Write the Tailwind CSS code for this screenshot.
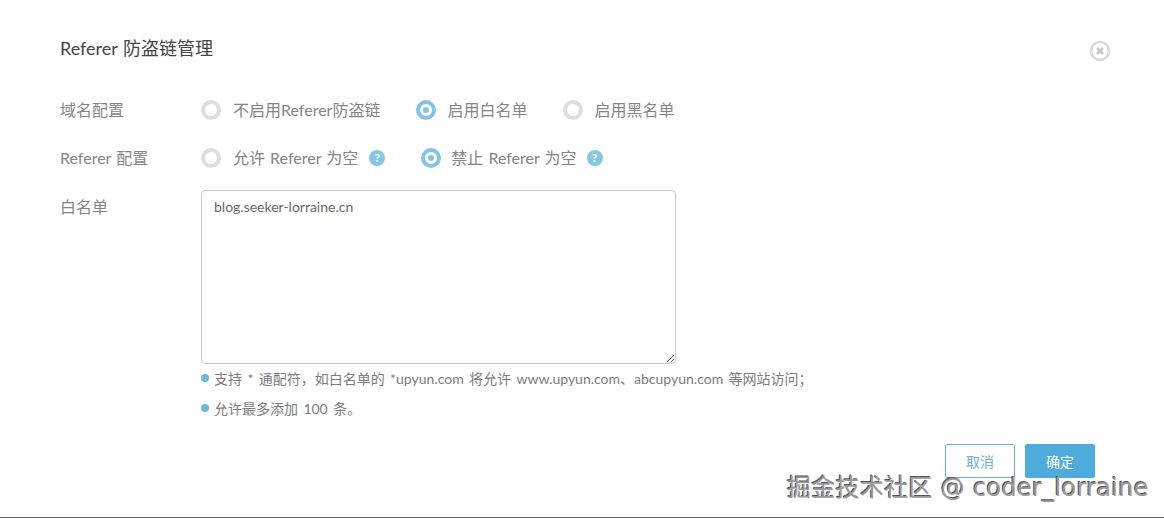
<!DOCTYPE html>
<html lang="zh">
<head>
<meta charset="utf-8">
<script src="https://cdn.jsdelivr.net/npm/@tailwindcss/browser@4"></script>
</head>
<body class="bg-white">
<div class="relative w-[1164px] h-[518px] overflow-hidden bg-white border-b border-[#666] font-['Lato','Noto_Sans_CJK_SC',sans-serif] text-[16px] text-[#858585] [word-spacing:1px]">
  <div class="flex justify-between pl-[60px] pr-[53px] pt-[36px]">
    <h1 class="text-[18px] leading-[24px] text-[#444] font-normal">Referer 防盗链管理</h1>
    <svg class="mt-[4px]" width="22" height="22" viewBox="0 0 22 22" fill="none"><circle cx="11" cy="11" r="9" stroke="#d9d9d9" stroke-width="2.6"/><path d="M8 8l6 6M14 8l-6 6" stroke="#c9c9c9" stroke-width="2.6"/></svg>
  </div>
  <div class="flex flex-col pl-[60px] pt-[36px]">
    <div class="flex items-center h-[24px]">
      <div class="w-[141px] leading-[24px]">域名配置</div>
      <div class="flex items-center gap-[12px]"><span class="w-[20px] h-[20px] rounded-full border-[4px] border-[#dedede] bg-white"></span><span>不启用Referer防盗链</span></div>
      <div class="flex items-center gap-[11px] ml-[36px]"><span class="flex items-center justify-center w-[20px] h-[20px] rounded-full border-[4px] border-[#82c3e6] bg-white"><span class="w-[6px] h-[6px] rounded-full bg-[#82c3e6]"></span></span><span>启用白名单</span></div>
      <div class="flex items-center gap-[11px] ml-[36px]"><span class="w-[20px] h-[20px] rounded-full border-[4px] border-[#dedede] bg-white"></span><span>启用黑名单</span></div>
    </div>
    <div class="flex items-center h-[24px] mt-[24px]">
      <div class="w-[141px] leading-[24px]">Referer 配置</div>
      <div class="flex items-center gap-[12px]"><span class="w-[20px] h-[20px] rounded-full border-[4px] border-[#dedede] bg-white"></span><span>允许 Referer 为空</span></div>
      <span class="flex items-center justify-center w-[16px] h-[16px] ml-[11px] rounded-full bg-[#85c7e3] text-white text-[12px] font-bold leading-none">?</span>
      <div class="flex items-center gap-[10px] ml-[36px]"><span class="flex items-center justify-center w-[20px] h-[20px] rounded-full border-[4px] border-[#82c3e6] bg-white"><span class="w-[6px] h-[6px] rounded-full bg-[#82c3e6]"></span></span><span>禁止 Referer 为空</span></div>
      <span class="flex items-center justify-center w-[16px] h-[16px] ml-[10px] rounded-full bg-[#85c7e3] text-white text-[12px] font-bold leading-none">?</span>
    </div>
    <div class="flex mt-[20px]">
      <div class="w-[141px] leading-[24px] pt-[5px]">白名单</div>
      <div>
        <textarea class="block w-[475px] h-[174px] px-[12px] py-[6px] rounded-[4px] border border-[#c8c8c8] text-[14px] leading-[20px] text-[#6a6a6a] outline-none">blog.seeker-lorraine.cn</textarea>
        <div class="flex items-center gap-[5px] mt-[4px] h-[20px] text-[14px] whitespace-nowrap text-[#7c7c7c] [word-spacing:1.8px]"><span class="w-[8px] h-[8px] rounded-full bg-[#72b6d6]"></span><span>支持 * 通配符，如白名单的 *upyun.com 将允许 www.upyun.com、abcupyun.com 等网站访问；</span></div>
        <div class="flex items-center gap-[5px] mt-[10px] h-[20px] text-[14px] text-[#7c7c7c] [word-spacing:1.8px]"><span class="w-[8px] h-[8px] rounded-full bg-[#72b6d6]"></span><span>允许最多添加 100 条。</span></div>
      </div>
    </div>
    <div class="flex justify-end gap-[10px] pr-[69px] mt-[26px]">
      <button class="w-[70px] h-[34px] rounded-[2px] border border-[#64b0d9] bg-white text-[14px] text-[#6cb0d8]">取消</button>
      <button class="w-[70px] h-[34px] rounded-[2px] bg-[#4eabdb] text-[14px] text-white">确定</button>
    </div>
  </div>
  <div class="absolute left-[787px] top-[472px] text-[24px] leading-[32px] tracking-[0.3px] [word-spacing:0] whitespace-nowrap text-[#9a9a9a] font-['DejaVu_Sans','Noto_Sans_CJK_SC',sans-serif] [text-shadow:1px_1px_0_#fff,-1px_-1px_0_#555]">掘金技术社区 @ coder_lorraine</div>
</div>
</body>
</html>
